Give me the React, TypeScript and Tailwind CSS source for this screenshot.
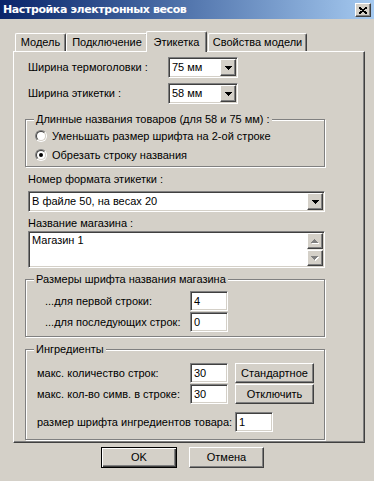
import type { ReactNode } from "react";

const sunken =
  "border border-t-[#808080] border-l-[#808080] border-b-white border-r-white shadow-[inset_1px_1px_0_#404040,inset_-1px_-1px_0_#D4D0C8]";
const raised =
  "border border-t-white border-l-white border-b-[#404040] border-r-[#404040] shadow-[inset_-1px_-1px_0_#808080]";

function DownArrow({ color = "#000" }: { color?: string }) {
  return (
    <svg width="7" height="4" viewBox="0 0 7 4" shapeRendering="crispEdges">
      <rect x="0" y="0" width="7" height="1" fill={color} />
      <rect x="1" y="1" width="5" height="1" fill={color} />
      <rect x="2" y="2" width="3" height="1" fill={color} />
      <rect x="3" y="3" width="1" height="1" fill={color} />
    </svg>
  );
}

function GrayArrow({ up }: { up?: boolean }) {
  // disabled scroll arrow: gray glyph with white shadow
  const rows = up ? [3, 2, 1, 0] : [0, 1, 2, 3];
  return (
    <svg width="8" height="5" viewBox="0 0 8 5" shapeRendering="crispEdges">
      {rows.map((r, i) => (
        <rect key={"w" + i} x={r + 1} y={i + 1} width={7 - r * 2} height="1" fill="#fff" />
      ))}
      {rows.map((r, i) => (
        <rect key={"g" + i} x={r} y={i} width={7 - r * 2} height="1" fill="#808080" />
      ))}
    </svg>
  );
}

function Combo({ value, w }: { value: string; w: string }) {
  return (
    <div className={`${sunken} ${w} h-[21px] p-[1px] bg-white flex`}>
      <div className="flex-1 pl-[2px] leading-[17px]">{value}</div>
      <div className={`${raised} w-[16px] h-[17px] bg-[#D4D0C8] flex items-center justify-center`}>
        <DownArrow />
      </div>
    </div>
  );
}

function Field({ value, w = "w-[38px]" }: { value: string; w?: string }) {
  return (
    <div className={`${sunken} ${w} h-[20px] p-[1px] bg-white pl-[3px] leading-[16px]`}>{value}</div>
  );
}

function Radio({ checked, label }: { checked?: boolean; label: string }) {
  return (
    <div className="mt-[1px] ml-[9px] h-[18px] flex items-center gap-[5px]">
      <span className="w-[12px] h-[12px] rounded-full border border-t-[#808080] border-l-[#808080] border-b-white border-r-white flex items-center justify-center">
        <span className="w-[10px] h-[10px] rounded-full bg-white border border-t-[#404040] border-l-[#404040] border-b-[#D4D0C8] border-r-[#D4D0C8] flex items-center justify-center">
          {checked && <span className="w-[4px] h-[4px] rounded-full bg-black" />}
        </span>
      </span>
      <span>{label}</span>
    </div>
  );
}

function Group({ title, className, children }: { title: string; className: string; children: ReactNode }) {
  return (
    <div className={`w-[300px] border border-[#808080] shadow-[inset_1px_1px_0_#fff,1px_1px_0_#fff] ${className}`}>
      <div className="-mt-[7px] ml-[8px] w-fit px-[2px] bg-[#D4D0C8] leading-[13px]">{title}</div>
      {children}
    </div>
  );
}

function Button({ label, w = "w-[79px]", h = "h-[20px]", def }: { label: string; w?: string; h?: string; def?: boolean }) {
  const edge = def
    ? "border border-black shadow-[inset_1px_1px_0_#fff,inset_-1px_-1px_0_#404040,inset_-2px_-2px_0_#808080]"
    : raised;
  return <div className={`${edge} ${w} ${h} flex items-center justify-center bg-[#D4D0C8]`}>{label}</div>;
}

export default function App() {
  return (
    <div className="w-[374px] h-[481px] overflow-hidden bg-[#D4D0C8] text-black text-[11px] font-['Liberation_Sans',Arial,sans-serif]">
      {/* Title bar */}
      <div className="h-[19px] flex bg-gradient-to-r from-[#0A246A] to-[#A6CAF0]">
        <div className="flex-1 pl-[3px] leading-[19px] text-[11px] font-bold tracking-[-0.4px] text-white font-['DejaVu_Sans',sans-serif]">
          Настройка электронных весов
        </div>
        <div className={`${raised} mt-[3px] mr-[3px] w-[16px] h-[14px] bg-[#D4D0C8] flex items-center justify-center`}>
          <svg width="8" height="7" viewBox="0 0 8 7" shapeRendering="crispEdges">
            <path d="M0 0L8 7M8 0L0 7" stroke="#000" strokeWidth="1.8" />
          </svg>
        </div>
      </div>

      <div className="pl-[13px] pt-[12px]">
        {/* Tabs */}
        <div className="h-[20px] flex items-end pl-[2px]">
          <div className="w-[51px] h-[18px] rounded-t-[2px] border-t border-l border-white border-r border-r-[#404040] shadow-[inset_-1px_0_0_#808080] flex items-center justify-center">
            Модель
          </div>
          <div className="w-[82px] h-[18px] rounded-t-[2px] border-t border-l border-white border-r border-r-[#404040] shadow-[inset_-1px_0_0_#808080] flex items-center justify-center">
            Подключение
          </div>
          <div className="relative z-10 -ml-[2px] mr-[1px] -mb-px w-[61px] h-[21px] rounded-t-[2px] bg-[#D4D0C8] border-t border-l border-white border-r border-r-[#404040] shadow-[inset_-1px_0_0_#808080] flex justify-center pt-[2px]">
            Этикетка
          </div>
          <div className="w-[99px] h-[18px] rounded-t-[2px] border-t border-l border-white border-r border-r-[#404040] shadow-[inset_-1px_0_0_#808080] flex items-center justify-center">
            Свойства модели
          </div>
        </div>

        {/* Tab panel */}
        <div className="w-[352px] h-[392px] pl-[11px] border border-t-white border-l-white border-r-[#404040] border-b-[#404040] shadow-[inset_-1px_-1px_0_#808080]">
          <div className="mt-[5px] ml-[3px] h-[21px] flex items-center">
            <span className="w-[140px]">Ширина термоголовки :</span>
            <Combo value="75 мм" w="w-[70px]" />
          </div>
          <div className="mt-[5px] ml-[3px] h-[21px] flex items-center">
            <span className="w-[140px]">Ширина этикетки :</span>
            <Combo value="58 мм" w="w-[70px]" />
          </div>

          <Group title="Длинные названия товаров (для 58 и 75 мм) :" className="mt-[15px] pb-[2px]">
            <Radio label="Уменьшать размер шрифта на 2-ой строке" />
            <Radio checked label="Обрезать строку названия" />
          </Group>

          <div className="mt-[6px] ml-[3px] leading-[13px]">Номер формата этикетки :</div>
          <div className="mt-[5px] ml-[3px]">
            <Combo value="В файле 50, на весах 20" w="w-[297px]" />
          </div>

          <div className="mt-[5px] ml-[3px] leading-[13px]">Название магазина :</div>
          <div className={`${sunken} mt-[1px] ml-[3px] w-[297px] h-[37px] p-[1px] bg-white flex`}>
            <div className="flex-1 pl-[2px] leading-[14px]">Магазин 1</div>
            <div className="w-[16px] flex flex-col justify-between bg-[#ECEAE5]">
              <div className={`${raised} h-[16px] bg-[#D4D0C8] flex items-center justify-center`}>
                <GrayArrow up />
              </div>
              <div className={`${raised} h-[16px] bg-[#D4D0C8] flex items-center justify-center`}>
                <GrayArrow />
              </div>
            </div>
          </div>

          <Group title="Размеры шрифта названия магазина" className="mt-[11px] pb-[4px]">
            <div className="mt-[5px] ml-[19px] h-[20px] flex items-center">
              <span className="w-[145px]">...для первой строки:</span>
              <Field value="4" />
            </div>
            <div className="mt-[1px] ml-[19px] h-[20px] flex items-center">
              <span className="w-[145px]">...для последующих строк:</span>
              <Field value="0" />
            </div>
          </Group>

          <Group title="Ингредиенты" className="mt-[12px] pb-[7px]">
            <div className="mt-[7px] ml-[11px] h-[20px] flex items-center">
              <span className="w-[153px]">макс. количество строк:</span>
              <Field value="30" />
              <div className="ml-[7px]">
                <Button label="Стандартное" />
              </div>
            </div>
            <div className="mt-[1px] ml-[11px] h-[20px] flex items-center">
              <span className="w-[153px]">макс. кол-во симв. в строке:</span>
              <Field value="30" />
              <div className="ml-[7px]">
                <Button label="Отключить" />
              </div>
            </div>
            <div className="mt-[8px] ml-[11px] h-[20px] flex items-center">
              <span className="w-[198px]">размер шрифта ингредиентов товара:</span>
              <Field value="1" />
            </div>
          </Group>
        </div>

        {/* Dialog buttons */}
        <div className="mt-[4px] ml-[88px] flex gap-[12px]">
          <Button label="OK" w="w-[76px]" h="h-[21px]" def />
          <Button label="Отмена" w="w-[75px]" h="h-[21px]" />
        </div>
      </div>
    </div>
  );
}
